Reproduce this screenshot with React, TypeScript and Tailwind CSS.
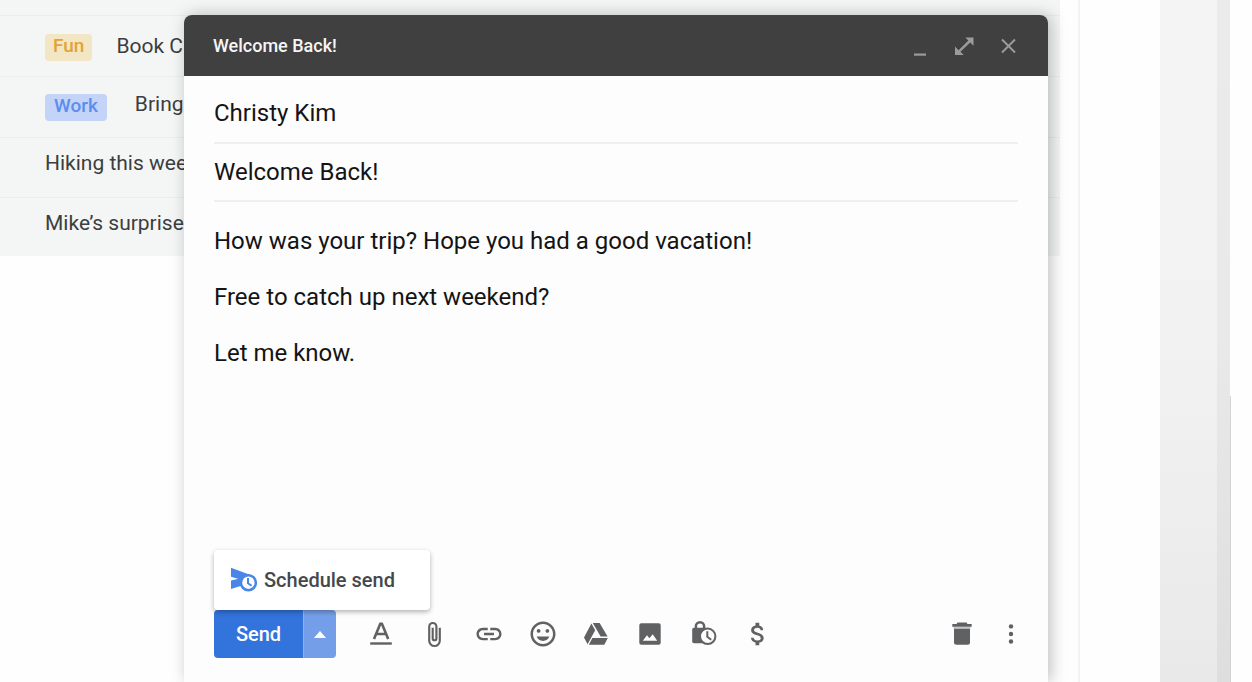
import React, { useState } from 'react';
import { MdInsertLink, MdOutlineInsertEmoticon, MdAttachMoney } from 'react-icons/md';

const threads = [
  { id: 1, title: 'Book Club', tag: 'Fun', row: 'h-[61px]', tagStyle: 'mt-[18px] mr-6 px-2 bg-[#f3e6c4] text-[#e3a237]', titleStyle: 'mt-4' },
  { id: 2, title: 'Bring snacks', tag: 'Work', row: 'h-[61px]', tagStyle: 'mt-[17px] mr-7 px-[9px] bg-[#c3d4f8] text-[#5b8def]', titleStyle: 'mt-[13px]' },
  { id: 3, title: 'Hiking this weekend', row: 'h-[60px]', titleStyle: 'mt-[11px]' },
  { id: 4, title: 'Mike’s surprise party', row: 'h-[59px]', titleStyle: 'mt-[11px]' },
];

const initialBody = `How was your trip? Hope you had a good vacation!

Free to catch up next weekend?

Let me know.`;

function FormatIcon() {
  return (
    <svg viewBox="0 0 30 30" className="size-[30px]" fill="none" stroke="currentColor" strokeWidth="2.6">
      <path d="M8 20 14.3 4.7h1.6L22.2 20M10.400 15h9.400" />
      <path d="M4.2 24.5h21.600" strokeWidth="2.4" />
    </svg>
  );
}

function ClipIcon() {
  return (
    <svg viewBox="0 0 24 24" className="size-[27px]" fill="none" stroke="currentColor" strokeWidth="1.9">
      <path d="M16.700 6v11.500a4.700 4.700 0 0 1-9.400 0V5a3.200 3.200 0 0 1 6.400 0v10.500a1.650 1.650 0 0 1-3.300 0V6" />
    </svg>
  );
}

function DriveIcon() {
  return (
    <svg viewBox="0 0 30 30" className="size-[30px]" fill="currentColor">
      <path d="M10.400 4.600 14.200 11.200 6.600 25.200 3 18.600z" />
      <path d="M11.800 4h6.800l8 13.600h-7z" />
      <path d="M11.400 19h15.400l-3.500 6.700H7.800z" />
    </svg>
  );
}

function PhotoIcon() {
  return (
    <svg viewBox="0 0 30 30" className="size-[30px]" fill="currentColor">
      <path fillRule="evenodd" d="M6.300 4.200h17.400a2 2 0 0 1 2 2v17.500a2 2 0 0 1-2 2H6.300a2 2 0 0 1-2-2V6.200a2 2 0 0 1 2-2zM7.800 21.800h14.400l-4.500-6.500-3.300 4-2.400-3z" />
    </svg>
  );
}

function LockClockIcon() {
  return (
    <svg viewBox="0 0 30 30" className="size-[30px]" fill="none" stroke="currentColor">
      <path d="M6.900 10V7.300a4.100 4.100 0 0 1 8.200 0V10" strokeWidth="2.500" />
      <rect x="3.200" y="8.800" width="15.500" height="15.500" rx="1.800" fill="currentColor" stroke="none" />
      <circle cx="18.700" cy="17.300" r="7.700" fill="#fdfdfd" strokeWidth="2" />
      <path d="M18.300 12.300v5.400l3.900 3" strokeWidth="2" />
    </svg>
  );
}

function TrashIcon() {
  return (
    <svg viewBox="0 0 30 30" className="size-[30px]" fill="currentColor">
      <path d="M10.500 3.600h9l1 1.400h4.200v2.800H5.300V5h4.200z" />
      <path d="M6.500 7.800h17v2h-17z" opacity=".35" />
      <path d="M7 9.800h16v13.500a2.500 2.500 0 0 1-2.500 2.500h-11A2.500 2.500 0 0 1 7 23.300z" />
    </svg>
  );
}

function MoreIcon() {
  return (
    <svg viewBox="0 0 30 30" className="size-[30px]" fill="currentColor">
      <circle cx="15" cy="7.400" r="2.200" />
      <circle cx="15" cy="15" r="2.200" />
      <circle cx="15" cy="22.500" r="2.200" />
    </svg>
  );
}

function ScheduleIcon() {
  return (
    <svg viewBox="0 0 28 26" className="h-[26px] w-7 shrink-0" fill="#4a86e8">
      <path d="M1 .8 20.500 8 12 13 1 9.800z" />
      <path d="M1 13.600l11-2.600v7.500L1 22z" />
      <circle cx="18.400" cy="15.700" r="7.500" fill="#fff" stroke="#4a86e8" strokeWidth="2.600" />
      <path d="M18 11v5.200l3.600 2.600" fill="none" stroke="#4a86e8" strokeWidth="2" />
    </svg>
  );
}

const tools = [
  { label: 'Formatting options', icon: <FormatIcon /> },
  { label: 'Attach files', icon: <ClipIcon /> },
  { label: 'Insert link', icon: <MdInsertLink size={30} /> },
  { label: 'Insert emoji', icon: <MdOutlineInsertEmoticon size={30} /> },
  { label: 'Insert files using Drive', icon: <DriveIcon /> },
  { label: 'Insert photo', icon: <PhotoIcon /> },
  { label: 'Confidential mode', icon: <LockClockIcon /> },
  { label: 'Send money', icon: <MdAttachMoney size={30} /> },
];

function ThreadList() {
  return (
    <ul className="mr-[18px] bg-[#f4f6f6] pt-[15px]">
      {threads.map((thread) => (
        <li key={thread.id} className={`flex items-start border-t border-[#eaeded] pl-[45px] ${thread.row}`}>
          {thread.tag && (
            <span className={`h-[27px] rounded text-[19px] leading-6 font-medium ${thread.tagStyle}`}>{thread.tag}</span>
          )}
          <span className={`text-[21px] leading-7 text-[#3c3d3e] ${thread.titleStyle}`}>{thread.title}</span>
        </li>
      ))}
    </ul>
  );
}

function ComposeWindow() {
  const [to, setTo] = useState('Christy Kim');
  const [subject, setSubject] = useState('Welcome Back!');
  const [body, setBody] = useState(initialBody);
  const [menuOpen, setMenuOpen] = useState(true);

  return (
    <section className="absolute top-[15px] bottom-0 left-[184px] right-[204px] flex flex-col rounded-t-lg bg-[#fdfdfd] shadow-[3px_0_16px_rgba(0,0,0,0.25)]">
      <header className="flex h-[61px] shrink-0 items-center justify-between rounded-t-lg bg-[#404040] pr-7 pl-[29px]">
        <h1 className="text-[18px] font-medium text-[#f5f5f5]">Welcome Back!</h1>
        <div className="flex gap-5 text-[#9b9b9b]">
          <button aria-label="Minimize">
            <svg viewBox="0 0 24 24" className="size-6" fill="currentColor"><path d="M6 19.500h12v2.200H6z" /></svg>
          </button>
          <button aria-label="Full screen">
            <svg viewBox="0 0 24 24" className="size-6" fill="currentColor">
              <path d="M13.300 3.500h8.200v8.200l-3.300-3.300-9.800 9.300 3.400 3.400H3v-8.500l3.600 3.600 9.800-9.600z" />
            </svg>
          </button>
          <button aria-label="Close">
            <svg viewBox="0 0 24 24" className="size-6" stroke="currentColor" strokeWidth="2"><path d="M6 5.500l13 13M19 5.500L6 18.500" /></svg>
          </button>
        </div>
      </header>

      <div className="flex flex-1 flex-col px-[30px] text-[24px] text-[#141414]">
        <input
          aria-label="To"
          value={to}
          onChange={(e) => setTo(e.target.value)}
          className="mt-2 h-[60px] border-b-2 border-[#eef1f1] focus:outline-none"
        />
        <input
          aria-label="Subject"
          value={subject}
          onChange={(e) => setSubject(e.target.value)}
          className="h-[58px] border-b-2 border-[#eef1f1] focus:outline-none"
        />
        <textarea
          aria-label="Message"
          value={body}
          onChange={(e) => setBody(e.target.value)}
          className="mt-[25px] flex-1 resize-none leading-7 focus:outline-none"
        />
      </div>

      <footer className="flex items-center pr-[22px] pb-6 pl-[30px] text-[#5f6163]">
        <div className="relative flex h-12 text-white">
          <button className="w-[89px] rounded-l bg-[#3273dc] text-[20px] font-medium">Send</button>
          <button
            aria-label="More send options"
            onClick={() => setMenuOpen(!menuOpen)}
            className="flex w-[33px] items-center justify-center rounded-r border-l border-[#8fb2ee] bg-[#749fe8]"
          >
            <svg viewBox="0 0 12 7" className="h-[7px] w-3" fill="currentColor"><path d="M0 7l6-7 6 7z" /></svg>
          </button>
          {menuOpen && (
            <div className="absolute bottom-full left-0 w-[216px] rounded bg-white shadow-[0_2px_5px_rgba(0,0,0,0.3)]">
              <button className="flex h-[60px] w-full items-center gap-1.5 pl-4 text-[20px] font-medium whitespace-nowrap text-[#45484b]">
                <ScheduleIcon />
                Schedule send
              </button>
            </div>
          )}
        </div>
        <div className="ml-[30px] flex w-[407px] justify-between">
          {tools.map((tool) => (
            <button key={tool.label} aria-label={tool.label} className="flex size-[30px] items-center justify-center">
              {tool.icon}
            </button>
          ))}
        </div>
        <div className="ml-auto flex gap-[19px]">
          <button aria-label="Discard draft"><TrashIcon /></button>
          <button aria-label="More options"><MoreIcon /></button>
        </div>
      </footer>
    </section>
  );
}

export default function App() {
  return (
    <div className="relative flex h-screen overflow-hidden bg-[#fefefe] font-['Roboto',sans-serif]">
      <main className="flex-1 border-r-2 border-[#f1f4f4]">
        <ThreadList />
      </main>
      <div className="w-20" />
      <div className="w-[57px] bg-linear-to-b from-[#f4f4f4] via-[#f2f2f2] to-[#e9e9e9]" />
      <div className="w-[13px] bg-linear-to-b from-[#ebebeb] via-[#e9e9e9] to-[#dedede]" />
      <div className="flex w-[22px] flex-col justify-end">
        <div className="h-[42%] border-l border-[#d4d4d4]" />
      </div>
      <ComposeWindow />
    </div>
  );
}
